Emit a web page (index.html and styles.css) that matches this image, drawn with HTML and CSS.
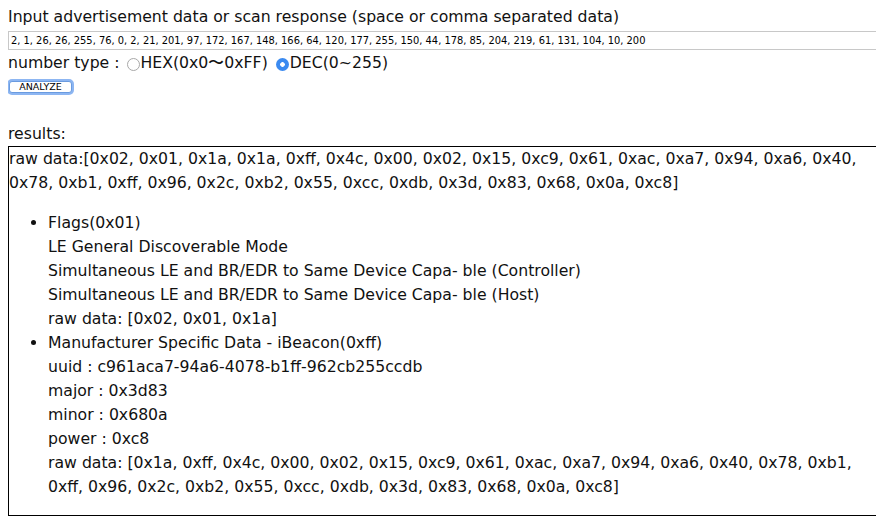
FILE: index.html
```html
<!DOCTYPE html>
<html>
<head>
<meta charset="utf-8">
<link rel="stylesheet" href="styles.css">
</head>
<body>
<div class="title">Input advertisement data or scan response (space or comma separated data)</div>
<input class="data-input" type="text" value="2, 1, 26, 26, 255, 76, 0, 2, 21, 201, 97, 172, 167, 148, 166, 64, 120, 177, 255, 150, 44, 178, 85, 204, 219, 61, 131, 104, 10, 200">
<div class="type-row">number type : <label class="opt"><input type="radio" name="t" class="radio">HEX(0x0〜0xFF)</label><label class="opt opt-second"><input type="radio" name="t" class="radio" checked>DEC(0~255)</label></div>
<button class="analyze">ANALYZE</button>
<div class="results-label">results:</div>
<div class="results">
<div>raw data:[0x02, 0x01, 0x1a, 0x1a, 0xff, 0x4c, 0x00, 0x02, 0x15, 0xc9, 0x61, 0xac, 0xa7, 0x94, 0xa6, 0x40, 0x78, 0xb1, 0xff, 0x96, 0x2c, 0xb2, 0x55, 0xcc, 0xdb, 0x3d, 0x83, 0x68, 0x0a, 0xc8]</div>
<ul class="list">
<li>Flags(0x01)<br>LE General Discoverable Mode<br>Simultaneous LE and BR/EDR to Same Device Capa- ble (Controller)<br>Simultaneous LE and BR/EDR to Same Device Capa- ble (Host)<br>raw data: [0x02, 0x01, 0x1a]</li>
<li>Manufacturer Specific Data - iBeacon(0xff)<br>uuid : c961aca7-94a6-4078-b1ff-962cb255ccdb<br>major : 0x3d83<br>minor : 0x680a<br>power : 0xc8<br>raw data: [0x1a, 0xff, 0x4c, 0x00, 0x02, 0x15, 0xc9, 0x61, 0xac, 0xa7, 0x94, 0xa6, 0x40, 0x78, 0xb1, 0xff, 0x96, 0x2c, 0xb2, 0x55, 0xcc, 0xdb, 0x3d, 0x83, 0x68, 0x0a, 0xc8]</li>
</ul>
</div>
</body>
</html>
```
FILE: styles.css
```css
html, body { background: #fff; }
body {
  margin: 8px;
  font-family: "DejaVu Sans", Verdana, sans-serif;
  font-size: 15.7px;
  color: #111;
  overflow: hidden;
}
.title { line-height: 18px; }
.data-input {
  display: block;
  box-sizing: border-box;
  width: 900px;
  height: 19px;
  margin: 5px 0 0 0;
  padding: 1px 2px;
  border: 1px solid #c8c8c8;
  border-right: none;
  font-family: "DejaVu Sans", Verdana, sans-serif;
  font-size: 9.9px;
  color: #000;
  outline: none;
}
.type-row {
  line-height: 26px;
  display: flex;
  align-items: center;
  white-space: pre;
}
.opt { display: inline-flex; align-items: center; }
.opt-second { margin-left: 6px; }
.radio {
  appearance: none;
  -webkit-appearance: none;
  width: 13px;
  height: 13px;
  margin: 2px 1px 0 2px;
  border: 1px solid #a8a8a8;
  border-radius: 50%;
  background: #fff;
  box-sizing: border-box;
}
.radio:checked {
  border: none;
  background: radial-gradient(circle, #fff 0 2px, #3b8af0 2.6px);
}
.analyze {
  display: block;
  box-sizing: border-box;
  margin: 5px 0 0 1px;
  padding: 0;
  width: 63px;
  height: 12px;
  line-height: 10px;
  font-family: "DejaVu Sans", Verdana, sans-serif;
  font-size: 9.5px;
  color: #000;
  background: #fff;
  border: 1px solid #6a9be0;
  border-radius: 3px;
  box-shadow: 0 0 0 2px #8db6f2;
}
.results-label { margin-top: 29px; line-height: 24px; }
.results {
  border: 1px solid #000;
  line-height: 24px;
  margin-top: 0;
  margin-right: -2px;
}
.list { margin: 16px 0; padding-left: 39px; }
```
